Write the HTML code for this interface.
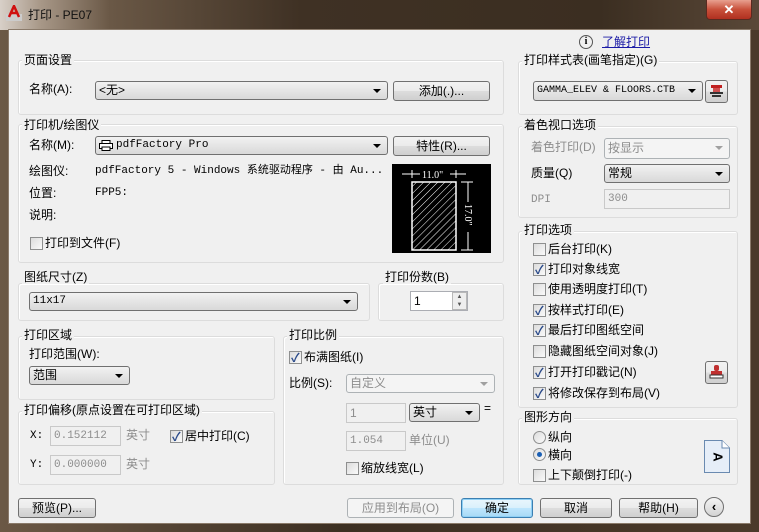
<!DOCTYPE html>
<html><head><meta charset="utf-8">
<style>
*{box-sizing:border-box;margin:0;padding:0}
body{width:759px;height:532px;overflow:hidden;position:relative;background:#4a3b2c;font-family:"Liberation Sans","Noto Sans CJK SC","WenQuanYi Zen Hei",sans-serif;font-size:12px;color:#000}
div,span{position:absolute}
.frame{left:0;top:0;width:759px;height:532px;background:linear-gradient(90deg,#6b5845 0%,#3c2f22 45%,#4b3a2a 100%);border-radius:7px 7px 0 0}
.title{left:0;top:0;width:759px;height:30px;background:linear-gradient(90deg,#d8d0c8 0px,#a89888 40px,#6a5846 110px,#3f3124 300px,#3b2e21 600px,#5a4838 759px)}
.client{left:8px;top:29px;width:743px;height:495px;background:#f0f0f0;border:1px solid #8a7a6a}
.t{line-height:14px;white-space:nowrap}
.g{color:#8d8d8d}
.mono{font-family:"Liberation Mono","Noto Sans CJK SC",monospace;font-size:11px}
.panel{border:1px solid #dcdcdc;border-radius:3px;box-shadow:inset 1px 1px 0 #fff}
.lbl{background:#f0f0f0;padding:0 2px;line-height:14px;white-space:nowrap}
.combo{height:19px;border:1px solid #707070;border-radius:3px;background:linear-gradient(#f2f2f2,#e5e5e5 50%,#d9d9d9);line-height:17px;padding-left:3px;white-space:nowrap}
.combo:after{content:"";position:absolute;right:6px;top:7px;border:4px solid transparent;border-top:4px solid #000;border-bottom:0}
.combo.dis{background:#f4f4f4;border-color:#adb2b5;color:#8d8d8d}
.combo.dis:after{border-top-color:#a0a0a0}
.btn{height:20px;border:1px solid #707070;border-radius:3px;background:linear-gradient(#f2f2f2,#ebebeb 50%,#dddddd 51%,#cfcfcf);text-align:center;line-height:18px;white-space:nowrap}
.btn.dis{background:#f4f4f4;border-color:#adb2b5;color:#8d8d8d}
.inp{height:20px;border:1px solid #abadb3;background:#fff;line-height:18px;padding-left:3px}
.inp.dis{background:#f0f0f0;border-color:#c9c9c9;color:#8d8d8d}
.cb{width:13px;height:13px;border:1px solid #8e8f8f;background:linear-gradient(135deg,#dcdcdc,#fafafa)}
.cb.on:after{content:"✓";position:absolute;left:1px;top:-3px;font-size:12px;color:#2a4a8a;font-weight:bold}
.rd{width:13px;height:13px;border:1px solid #8e8f8f;border-radius:50%;background:linear-gradient(135deg,#dcdcdc,#fafafa)}
.rd.on:after{content:"";position:absolute;left:3px;top:3px;width:5px;height:5px;border-radius:50%;background:#1a5fb4}
</style></head><body>
<div class="frame"></div>
<div class="title"></div>
<!-- title icon -->
<svg style="position:absolute;left:6px;top:5px" width="16" height="16"><rect x="0" y="9" width="16" height="7" fill="#ccc"/><path d="M3 12 L8 1 L13 12 M5 8 H11" stroke="#d01010" stroke-width="2.5" fill="none"/></svg>
<div class="t" style="left:28px;top:8px;color:#111;font-size:12px">打印 - PE07</div>
<div style="left:706px;top:0;width:46px;height:20px;border:1px solid #5a2a20;border-top:0;border-radius:0 0 4px 4px;background:linear-gradient(#e8a090,#c8503a 50%,#b03020);color:#fff;text-align:center;font-weight:bold;font-size:13px;line-height:19px">✕</div>
<div class="client"></div>

<!-- info link -->
<div style="left:579px;top:35px;width:14px;height:14px;border:1px solid #555;border-radius:50%;text-align:center;font-size:10px;line-height:12px;font-family:'Liberation Serif',serif;font-weight:bold">i</div>
<div class="t" style="left:602px;top:35px;color:#1a1aa6;text-decoration:underline">了解打印</div>

<!-- 页面设置 -->
<div class="panel" style="left:18px;top:60px;width:486px;height:55px"></div>
<div class="lbl" style="left:22px;top:53px">页面设置</div>
<div class="t" style="left:29px;top:82px">名称(A):</div>
<div class="combo" style="left:95px;top:81px;width:293px">&lt;无&gt;</div>
<div class="btn" style="left:393px;top:81px;width:97px">添加(.)...</div>

<!-- 打印机 -->
<div class="panel" style="left:18px;top:124px;width:486px;height:139px"></div>
<div class="lbl" style="left:22px;top:118px">打印机/绘图仪</div>
<div class="t" style="left:29px;top:138px">名称(M):</div>
<div class="combo mono" style="left:95px;top:136px;width:293px;padding-left:20px">pdfFactory Pro<svg style="position:absolute;left:3px;top:3px" width="14" height="11"><rect x="3" y="0.5" width="8" height="4" fill="#fff" stroke="#000"/><rect x="0.5" y="3.5" width="13" height="5" fill="#fff" stroke="#000"/><rect x="3" y="7" width="8" height="3.5" fill="#fff" stroke="#000"/></svg></div>
<div class="btn" style="left:393px;top:136px;width:97px">特性(R)...</div>
<div class="t" style="left:29px;top:164px">绘图仪:</div>
<div class="t mono" style="left:95px;top:164px">pdfFactory 5 - Windows 系统驱动程序 - 由 Au...</div>
<div class="t" style="left:29px;top:186px">位置:</div>
<div class="t mono" style="left:95px;top:186px">FPP5:</div>
<div class="t" style="left:29px;top:208px">说明:</div>
<div class="cb" style="left:30px;top:237px"></div>
<div class="t" style="left:45px;top:236px">打印到文件(F)</div>
<!-- preview -->
<svg style="position:absolute;left:392px;top:164px" width="99" height="89">
<defs><pattern id="h" width="5" height="5" patternUnits="userSpaceOnUse" patternTransform="rotate(45)"><line x1="0" y1="0" x2="0" y2="5" stroke="#fff" stroke-width="1"/></pattern></defs>
<rect width="99" height="89" fill="#000"/>
<rect x="20" y="18" width="44" height="68" fill="url(#h)" stroke="#fff" stroke-width="1.5"/>
<line x1="10" y1="10" x2="28" y2="10" stroke="#fff"/><line x1="58" y1="10" x2="74" y2="10" stroke="#fff"/>
<line x1="20" y1="6" x2="20" y2="14" stroke="#fff"/><line x1="64" y1="6" x2="64" y2="14" stroke="#fff"/>
<text x="30" y="14" fill="#fff" font-size="10" font-family="Liberation Serif">11.0"</text>
<line x1="69" y1="18" x2="81" y2="18" stroke="#fff"/><line x1="69" y1="86" x2="81" y2="86" stroke="#fff"/>
<line x1="76" y1="18" x2="76" y2="38" stroke="#fff"/><line x1="76" y1="68" x2="76" y2="86" stroke="#fff"/>
<text x="73" y="40" fill="#fff" font-size="10" font-family="Liberation Serif" transform="rotate(90 73 40)">17.0"</text>
</svg>

<!-- 图纸尺寸 -->
<div class="panel" style="left:18px;top:283px;width:352px;height:38px"></div>
<div class="lbl" style="left:22px;top:270px">图纸尺寸(Z)</div>
<div class="combo mono" style="left:29px;top:292px;width:329px">11x17</div>
<div class="panel" style="left:378px;top:283px;width:126px;height:38px"></div>
<div class="lbl" style="left:383px;top:270px">打印份数(B)</div>
<div class="inp" style="left:410px;top:291px;width:58px">1</div>
<div style="left:452px;top:292px;width:15px;height:18px;border:1px solid #b8b8b8;background:#eee;font-size:6px;line-height:8px;text-align:center;color:#555">▲<br>▼</div>

<!-- 打印区域 -->
<div class="panel" style="left:18px;top:336px;width:257px;height:64px"></div>
<div class="lbl" style="left:22px;top:328px">打印区域</div>
<div class="t" style="left:29px;top:347px">打印范围(W):</div>
<div class="combo" style="left:29px;top:366px;width:101px">范围</div>

<!-- 打印偏移 -->
<div class="panel" style="left:18px;top:411px;width:257px;height:74px"></div>
<div class="lbl" style="left:22px;top:403px">打印偏移(原点设置在可打印区域)</div>
<div class="t mono" style="left:30px;top:429px">X:</div>
<div class="inp dis mono" style="left:50px;top:426px;width:71px">0.152112</div>
<div class="t g" style="left:126px;top:428px">英寸</div>
<div class="cb on" style="left:170px;top:430px"></div>
<div class="t" style="left:185px;top:429px">居中打印(C)</div>
<div class="t mono" style="left:30px;top:458px">Y:</div>
<div class="inp dis mono" style="left:50px;top:455px;width:71px">0.000000</div>
<div class="t g" style="left:126px;top:457px">英寸</div>

<!-- 打印比例 -->
<div class="panel" style="left:283px;top:336px;width:221px;height:149px"></div>
<div class="lbl" style="left:287px;top:328px">打印比例</div>
<div class="cb on" style="left:289px;top:351px"></div>
<div class="t" style="left:304px;top:350px">布满图纸(I)</div>
<div class="t" style="left:289px;top:376px">比例(S):</div>
<div class="combo dis" style="left:346px;top:374px;width:149px">自定义</div>
<div class="inp dis" style="left:346px;top:403px;width:60px">1</div>
<div class="combo" style="left:409px;top:403px;width:71px">英寸</div>
<div class="t" style="left:484px;top:401px">=</div>
<div class="inp dis mono" style="left:346px;top:431px;width:60px">1.054</div>
<div class="t g" style="left:409px;top:433px">单位(U)</div>
<div class="cb" style="left:346px;top:462px"></div>
<div class="t" style="left:361px;top:461px">缩放线宽(L)</div>

<!-- 打印样式表 -->
<div class="panel" style="left:518px;top:61px;width:220px;height:54px"></div>
<div class="lbl" style="left:522px;top:53px">打印样式表(画笔指定)(G)</div>
<div class="combo mono" style="left:533px;top:81px;width:170px;height:20px;font-size:10px">GAMMA_ELEV &amp; FLOORS.CTB</div>
<div class="btn" style="left:705px;top:80px;width:23px;height:23px"></div>
<svg style="position:absolute;left:709px;top:84px" width="15" height="15"><rect x="2" y="1" width="11" height="3" fill="#c02020"/><rect x="4" y="4" width="7" height="4" fill="#d05050"/><rect x="1" y="8" width="13" height="2" fill="#333"/><rect x="3" y="11" width="9" height="2" fill="#333"/></svg>

<!-- 着色视口选项 -->
<div class="panel" style="left:518px;top:126px;width:220px;height:92px"></div>
<div class="lbl" style="left:522px;top:118px">着色视口选项</div>
<div class="t g" style="left:531px;top:140px">着色打印(D)</div>
<div class="combo dis" style="left:604px;top:138px;width:126px;height:21px;line-height:19px">按显示</div>
<div class="t" style="left:531px;top:166px">质量(Q)</div>
<div class="combo" style="left:604px;top:164px;width:126px">常规</div>
<div class="t g mono" style="left:531px;top:193px">DPI</div>
<div class="inp dis mono" style="left:604px;top:189px;width:126px">300</div>

<!-- 打印选项 -->
<div class="panel" style="left:518px;top:231px;width:220px;height:177px"></div>
<div class="lbl" style="left:522px;top:223px">打印选项</div>
<div class="cb" style="left:533px;top:243px"></div><div class="t" style="left:548px;top:242px">后台打印(K)</div>
<div class="cb on" style="left:533px;top:263px"></div><div class="t" style="left:548px;top:262px">打印对象线宽</div>
<div class="cb" style="left:533px;top:283px"></div><div class="t" style="left:548px;top:282px">使用透明度打印(T)</div>
<div class="cb on" style="left:533px;top:304px"></div><div class="t" style="left:548px;top:303px">按样式打印(E)</div>
<div class="cb on" style="left:533px;top:324px"></div><div class="t" style="left:548px;top:323px">最后打印图纸空间</div>
<div class="cb" style="left:533px;top:345px"></div><div class="t" style="left:548px;top:344px">隐藏图纸空间对象(J)</div>
<div class="cb on" style="left:533px;top:366px"></div><div class="t" style="left:548px;top:365px">打开打印戳记(N)</div>
<div class="cb on" style="left:533px;top:387px"></div><div class="t" style="left:548px;top:386px">将修改保存到布局(V)</div>
<div class="btn" style="left:705px;top:361px;width:23px;height:23px"></div>
<svg style="position:absolute;left:709px;top:364px" width="15" height="16"><rect x="5" y="1" width="5" height="6" rx="2" fill="#c03030"/><rect x="2" y="7" width="11" height="4" fill="#c03030"/><rect x="1" y="11" width="13" height="3" fill="#fff" stroke="#333"/></svg>

<!-- 图形方向 -->
<div class="panel" style="left:518px;top:418px;width:220px;height:67px"></div>
<div class="lbl" style="left:522px;top:410px">图形方向</div>
<div class="rd" style="left:533px;top:431px"></div><div class="t" style="left:548px;top:430px">纵向</div>
<div class="rd on" style="left:533px;top:448px"></div><div class="t" style="left:548px;top:448px">横向</div>
<div class="cb" style="left:533px;top:469px"></div><div class="t" style="left:548px;top:468px">上下颠倒打印(-)</div>
<svg style="position:absolute;left:704px;top:440px" width="26" height="33"><path d="M0.5 0.5 H18 L25.5 8 V32.5 H0.5 Z" fill="#e6eef8" stroke="#6a8ab0"/><path d="M18 0.5 V8 H25.5" fill="#fff" stroke="#6a8ab0"/><text x="13" y="17" font-size="13" font-weight="bold" font-family="Liberation Sans" transform="rotate(90 13 17)" text-anchor="middle" dominant-baseline="middle">A</text></svg>

<!-- bottom buttons -->
<div class="btn" style="left:18px;top:498px;width:78px">预览(P)...</div>
<div class="btn dis" style="left:347px;top:498px;width:107px">应用到布局(O)</div>
<div class="btn" style="left:461px;top:498px;width:72px;border-color:#3c7fb1;background:linear-gradient(#eaf6fd,#d9f0fc 50%,#bee6fd 51%,#a7d9f5);box-shadow:inset 0 0 0 1px #8fd0f5">确定</div>
<div class="btn" style="left:540px;top:498px;width:72px">取消</div>
<div class="btn" style="left:619px;top:498px;width:79px">帮助(H)</div>
<div style="left:704px;top:497px;width:20px;height:20px;border:1px solid #707070;border-radius:50%;background:linear-gradient(#f4f4f4,#d4d4d4);text-align:center;font-weight:bold;line-height:17px;font-size:13px">‹</div>
</body></html>
